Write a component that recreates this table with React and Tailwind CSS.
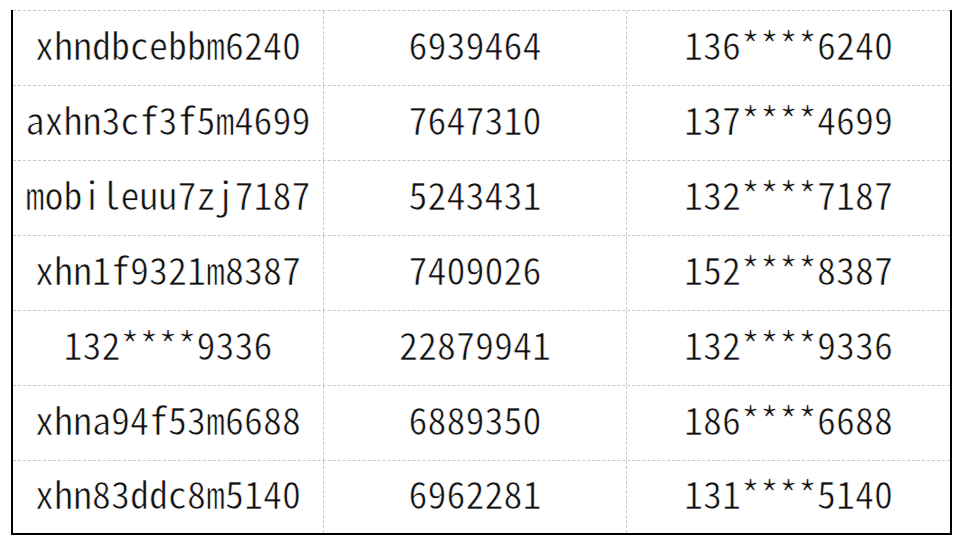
import React from "react";

const rows = [
  ["xhndbcebbm6240", "6939464", "136****6240"],
  ["axhn3cf3f5m4699", "7647310", "137****4699"],
  ["mobileuu7zj7187", "5243431", "132****7187"],
  ["xhn1f9321m8387", "7409026", "152****8387"],
  ["132****9336", "22879941", "132****9336"],
  ["xhna94f53m6688", "6889350", "186****6688"],
  ["xhn83ddc8m5140", "6962281", "131****5140"],
];

export default function App() {
  return (
    <div className="min-h-screen w-full bg-white pt-[10px] pl-[11px]">
      <div
        className="w-[941px] border-l-2 border-r-2 border-b-2 border-black text-[38px] text-[#111] [-webkit-text-stroke:0.7px_white]"
        style={{ fontFamily: '"Noto Sans Mono CJK SC", "DejaVu Sans Mono", monospace' }}
      >
        {rows.map((r, i) => (
          <div
            key={i}
            className={`grid grid-cols-[311px_303px_1fr] border-t border-dashed border-[#c8c8c8] ${
              i === rows.length - 1 ? "h-[73px]" : "h-[75px]"
            }`}
          >
            <div className="flex items-center justify-center pb-[9px] border-r border-dashed border-[#c8c8c8]">
              {r[0]}
            </div>
            <div className="flex items-center justify-center pb-[9px] border-r border-dashed border-[#c8c8c8]">
              {r[1]}
            </div>
            <div className="flex items-center justify-center pb-[9px]">{r[2]}</div>
          </div>
        ))}
      </div>
    </div>
  );
}
